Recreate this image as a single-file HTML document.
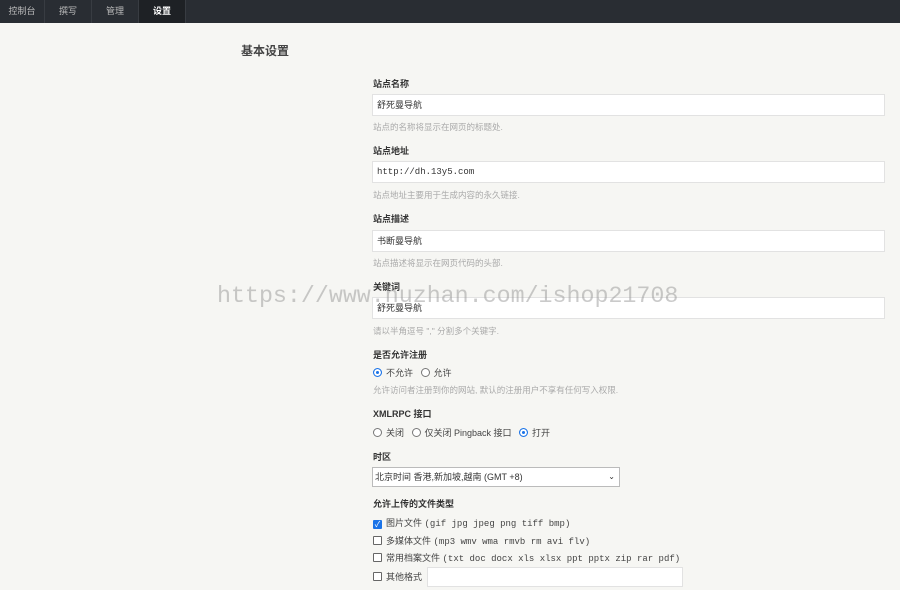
<!DOCTYPE html>
<html><head><meta charset="utf-8"><style>
*{box-sizing:border-box;margin:0;padding:0}
body{width:900px;height:590px;overflow:hidden;background:#f6f6f3;font-family:"Liberation Sans","Noto Sans CJK SC",sans-serif;font-size:9px;color:#444;position:relative}
.nav{height:23px;background:#292d33;display:flex}
.nav div{color:#bbb;font-size:9px;line-height:23px;text-align:center;border-right:1px solid #383c42}
.nav .on{background:#1e2125;color:#fff;font-weight:bold}
h2{position:absolute;left:241px;top:42px;font-size:12px;font-weight:bold;color:#444}
.a{position:absolute;left:373px}
.lab{font-weight:bold;font-size:9px;color:#333}
.in{position:absolute;left:372px;width:513px;height:22px;background:#fff;border:1px solid #e2e2e2;padding-left:4px;line-height:20px;font-size:9px;color:#333}
.mono{font-family:"Liberation Mono","Noto Sans CJK SC",monospace}
.d{color:#aaa;font-size:8.5px}
.r{display:inline-block;width:9px;height:9px;border:1px solid #777;border-radius:50%;vertical-align:-1px;margin-right:4px;background:#fff}
.r.on{border-color:#1a73e8;box-shadow:inset 0 0 0 2px #fff;background:#1a73e8}
.c{display:inline-block;width:9px;height:9px;border:1px solid #666;border-radius:1px;vertical-align:-1px;margin-right:4px;background:#fff}
.c.on{background:#1a73e8;border-color:#1a73e8;color:#fff;font-size:8px;line-height:7px;text-align:center}
.wm{position:absolute;left:217px;top:283px;font-family:"Liberation Mono",monospace;font-size:23.3px;color:rgba(150,150,150,.5);white-space:nowrap}
</style></head><body>
<div class="nav"><div style="width:45px">控制台</div><div style="width:47px">撰写</div><div style="width:47px">管理</div><div class="on" style="width:47px">设置</div></div>
<h2>基本设置</h2>
<div class="a lab" style="top:77px">站点名称</div>
<div class="in" style="top:94px">舒死曼导航</div>
<div class="a d" style="top:121px">站点的名称将显示在网页的标题处.</div>
<div class="a lab" style="top:144px">站点地址</div>
<div class="in mono" style="top:161px">http://dh.13y5.com</div>
<div class="a d" style="top:189px">站点地址主要用于生成内容的永久链接.</div>
<div class="a lab" style="top:212px">站点描述</div>
<div class="in" style="top:230px">书断曼导航</div>
<div class="a d" style="top:257px">站点描述将显示在网页代码的头部.</div>
<div class="a lab" style="top:280px">关键词</div>
<div class="in" style="top:297px">舒死曼导航</div>
<div class="a d" style="top:325px">请以半角逗号 "," 分割多个关键字.</div>
<div class="a lab" style="top:348px">是否允许注册</div>
<div class="a" style="top:366px"><span class="r on"></span>不允许 &nbsp; <span class="r"></span>允许</div>
<div class="a d" style="top:384px">允许访问者注册到你的网站, 默认的注册用户不享有任何写入权限.</div>
<div class="a lab" style="top:407px">XMLRPC 接口</div>
<div class="a" style="top:426px"><span class="r"></span>关闭 &nbsp; <span class="r"></span>仅关闭 Pingback 接口 &nbsp; <span class="r on"></span>打开</div>
<div class="a lab" style="top:450px">时区</div>
<div class="in" style="top:467px;width:248px;height:20px;line-height:18px;border-color:#bbb;padding-left:2px">北京时间 香港,新加坡,越南 (GMT +8)<span style="position:absolute;right:4px;font-size:8px">⌄</span></div>
<div class="a lab" style="top:497px">允许上传的文件类型</div>
<div class="a" style="top:516px"><span class="c on">✓</span>图片文件 <span class="mono">(gif jpg jpeg png tiff bmp)</span></div>
<div class="a" style="top:534px"><span class="c"></span>多媒体文件 <span class="mono">(mp3 wmv wma rmvb rm avi flv)</span></div>
<div class="a" style="top:551px"><span class="c"></span>常用档案文件 <span class="mono">(txt doc docx xls xlsx ppt pptx zip rar pdf)</span></div>
<div class="a" style="top:570px"><span class="c"></span>其他格式</div>
<div class="in" style="top:567px;left:427px;width:256px;height:20px"></div>
<div class="wm">https://www.huzhan.com/ishop21708</div>
</body></html>
